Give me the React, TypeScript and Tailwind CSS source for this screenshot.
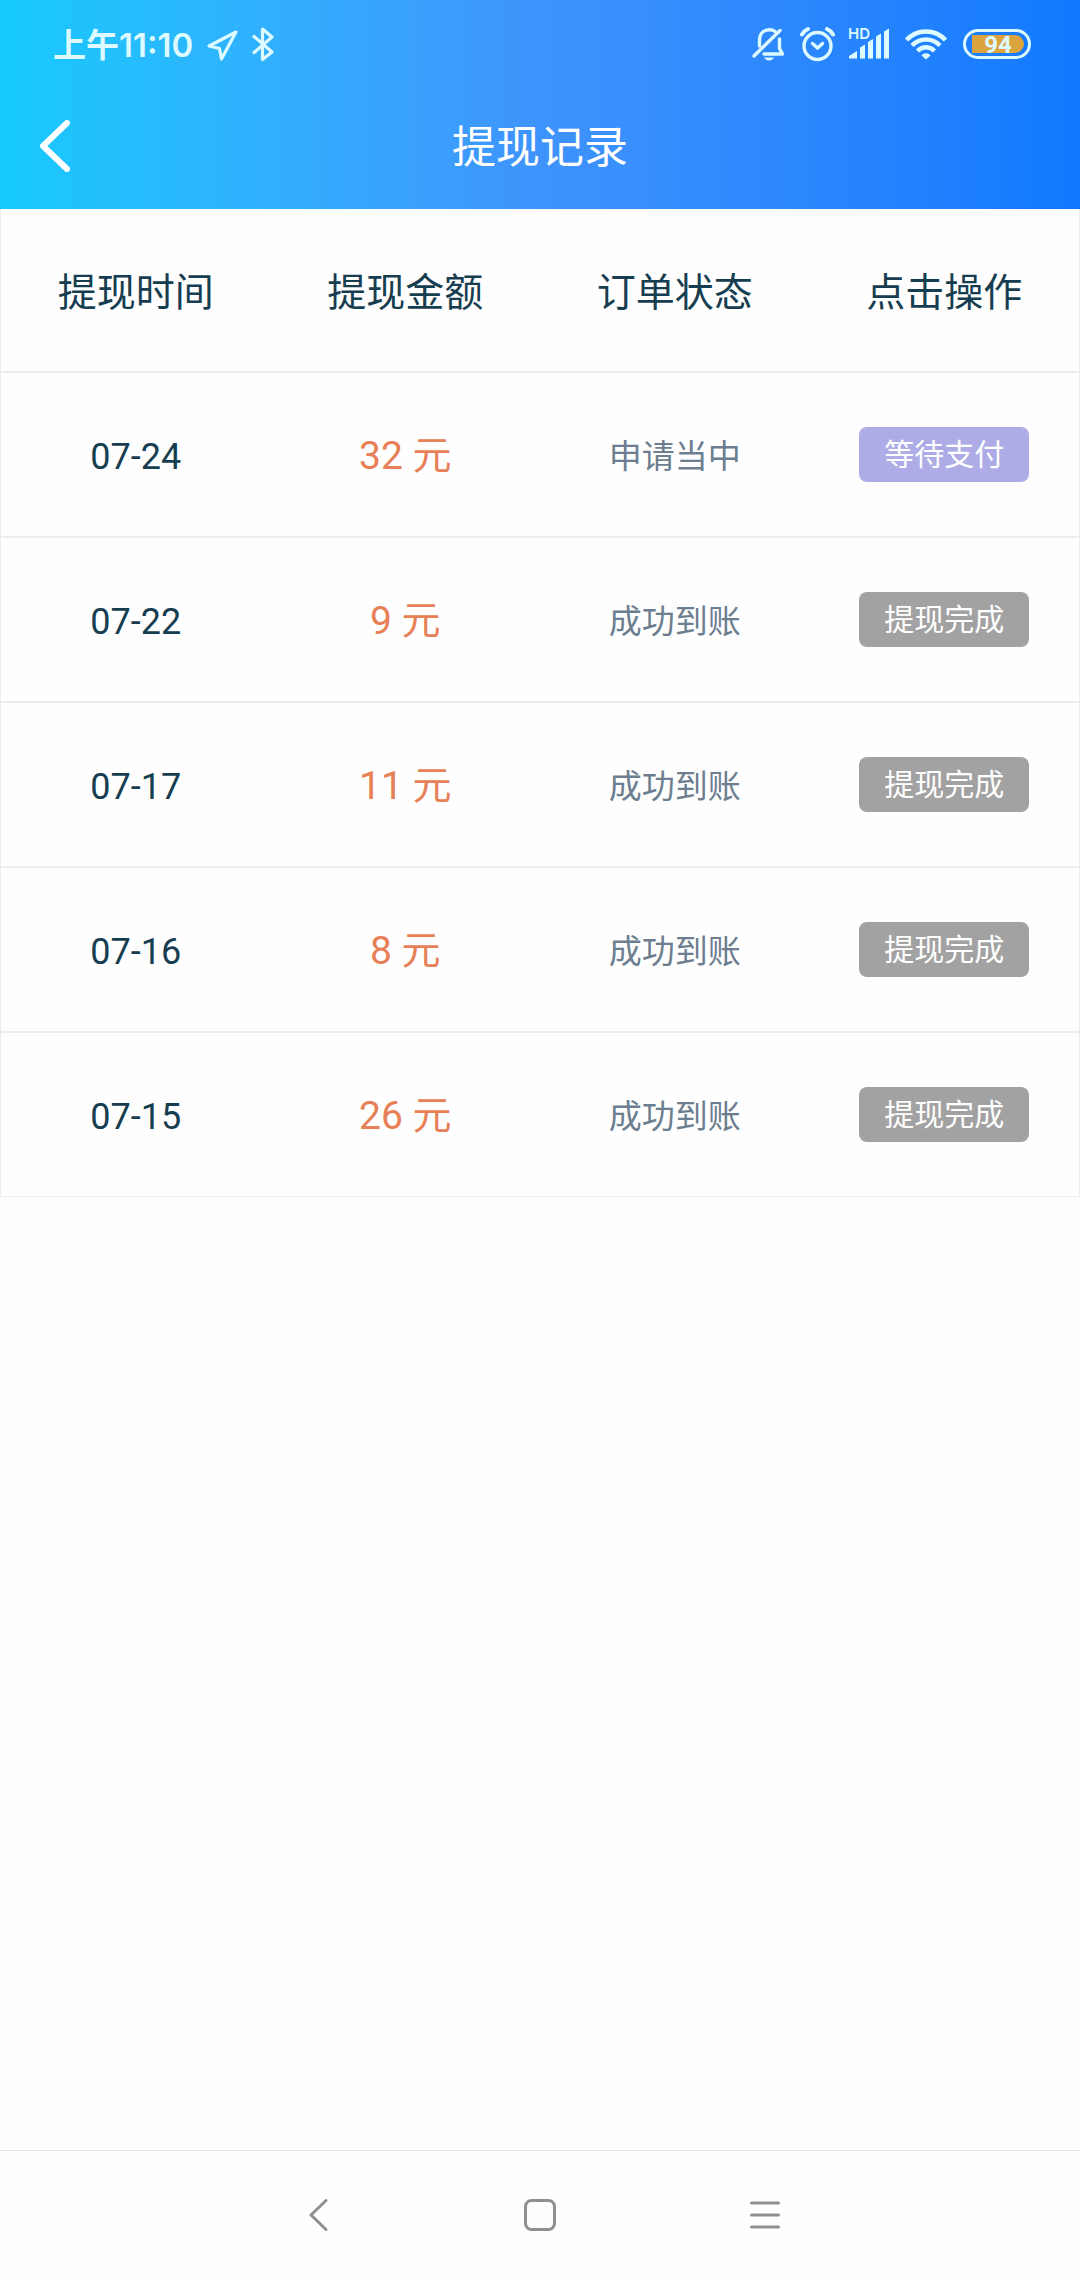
import { ReactNode } from 'react';

type OrderRecord = {
  date: string;
  amount: number;
  status: string;
  action: string;
  done: boolean;
};

const records: OrderRecord[] = [
  { date: '07-24', amount: 32, status: '申请当中', action: '等待支付', done: false },
  { date: '07-22', amount: 9, status: '成功到账', action: '提现完成', done: true },
  { date: '07-17', amount: 11, status: '成功到账', action: '提现完成', done: true },
  { date: '07-16', amount: 8, status: '成功到账', action: '提现完成', done: true },
  { date: '07-15', amount: 26, status: '成功到账', action: '提现完成', done: true },
];

const columns = ['提现时间', '提现金额', '订单状态', '点击操作'];

function StatusBar() {
  return (
    <div className="flex h-[84px] items-center justify-between pt-1 pr-[49px] pl-[53px] text-[#dcfaff]">
      <div className="flex items-center gap-[13px]">
        <span className="pt-0.5 font-[Inter,'Noto_Sans_CJK_SC',sans-serif] text-[33px] leading-[40px] font-semibold">上午11:10</span>
        {/* 定位 */}
        <svg width="33" height="36" viewBox="0 0 33 36" fill="none" stroke="currentColor" strokeWidth="3.2" strokeLinejoin="round">
          <path d="M30 6 3 20 13.500 22.500 15.500 33Z" />
        </svg>
        {/* 蓝牙 */}
        <svg width="22" height="36" viewBox="0 0 22 36" fill="none" stroke="currentColor" strokeWidth="3.2" strokeLinejoin="round" strokeLinecap="round">
          <path d="M2 10.500 20 26 10.500 33.500V3L20 11 2 26.500" />
        </svg>
      </div>

      <div className="flex items-center gap-[13px]">
        {/* 静音 */}
        <svg width="35" height="36" viewBox="0 0 35 36" fill="none" stroke="currentColor" strokeWidth="3.4" strokeLinecap="round" strokeLinejoin="round">
          <path d="M7.500 20V14.500C7.500 8 11.500 3.800 17.500 3.800 19.500 3.800 21.500 4.300 23 5.500" />
          <path d="M27.500 13V22.500L30.500 28H12" />
          <path d="M2 30 28 4.500" />
          <path d="M12 31.500H22C21 33.500 19 34.500 17 34.500 15 34.500 13 33.500 12 31.500Z" fill="currentColor" stroke="none" />
        </svg>
        {/* 闹钟 */}
        <svg width="35" height="36" viewBox="0 0 35 36" fill="none" stroke="currentColor" strokeWidth="3.4" strokeLinecap="round" strokeLinejoin="round">
          <circle cx="17.500" cy="20" r="13.500" />
          <path d="M12.500 17.500 17.500 22 22.500 17.500" />
          <path d="M2 8.500C3.500 6 5.500 4 8 3M33 8.500C31.500 6 29.500 4 27 3" strokeWidth="4" />
        </svg>
        {/* 信号 */}
        <svg width="41" height="36" viewBox="0 0 41 36" fill="currentColor" className="overflow-visible">
          <text x="0" y="13" className="font-[Inter,sans-serif] text-[15px] font-semibold">HD</text>
          <path d="M1 32.500V30L9 25V32.500ZM12 32.500V21.500L17 18.500V32.500ZM20 32.500V16L25 13V32.500ZM28 32.500V10.500L33 7.500V32.500ZM36 32.500V5.500L41 2.500V32.500Z" />
        </svg>
        {/* WiFi */}
        <svg width="48" height="36" viewBox="0 0 48 36" fill="none" stroke="currentColor" strokeWidth="4.500">
          <path d="M4.500 14C15 2.500 33 2.500 43.500 14" />
          <path d="M10 19.500C18 11.500 30 11.500 38 19.500" />
          <path d="M15.500 25C20.500 20 27.500 20 32.500 25" />
          <path d="M24 33.500 19.500 29.500C22 26.500 26 26.500 28.500 29.500Z" fill="currentColor" stroke="none" />
        </svg>
        {/* 电量 */}
        <div className="flex h-[30px] w-[68px] items-center rounded-full border-3 border-current pr-1 pl-[6px]">
          <div className="flex h-[18px] w-full items-center justify-center rounded-l-[2px] rounded-r-full bg-[#dba43f]">
            <span className="pt-0.5 font-[Roboto,sans-serif] text-[24px] leading-[18px] font-bold">94</span>
          </div>
        </div>
      </div>
    </div>
  );
}

function NavButton({ label, children }: { label: string; children: ReactNode }) {
  return (
    <button type="button" aria-label={label} className="flex h-full w-56 items-center justify-center">
      <svg width="40" height="40" viewBox="0 0 40 40" fill="none" stroke="#8f8f8f" strokeWidth="3" strokeLinecap="round" strokeLinejoin="round">
        {children}
      </svg>
    </button>
  );
}

export default function App() {
  return (
    <div className="flex min-h-screen flex-col bg-[#fefefe] font-[Roboto,'Noto_Sans_CJK_SC',sans-serif] text-[#173d50]">
      <header className="bg-linear-to-r from-[#14cafd] via-[#3f93fc] to-[#0f79ff]">
        <StatusBar />
        <div className="grid h-[125px] grid-cols-[120px_1fr_120px] items-center">
          <button type="button" aria-label="返回" className="flex h-full items-center pl-[38px] text-white">
            <svg width="34" height="56" viewBox="0 0 34 56" fill="none" stroke="currentColor" strokeWidth="6" strokeLinecap="round" strokeLinejoin="round">
              <path d="M29 4 5 27 29 50" />
            </svg>
          </button>
          <h1 className="pt-0.5 text-center text-[44px] leading-[60px] text-white">提现记录</h1>
        </div>
      </header>

      <main>
        <table className="w-full table-fixed border-separate border-spacing-0 border-x border-b border-[#ededed] text-center">
          <thead>
            <tr className="h-[162px]">
              {columns.map((column) => (
                <th key={column} scope="col" className="pt-1.5 text-[39px] leading-[60px] font-normal">{column}</th>
              ))}
            </tr>
          </thead>
          <tbody>
            {records.map((record) => (
              <tr key={record.date} className="h-[165px] *:border-t-2 *:border-[#ededed]">
                <td className="pt-1 text-[36px] leading-[60px]">{record.date}</td>
                <td className="pt-0.5 text-[39px] leading-[60px] text-[#e77f57]">{record.amount} 元</td>
                <td className="pt-1 text-[33px] leading-[60px] text-[#6c7e8f]">{record.status}</td>
                <td>
                  <button
                    type="button"
                    className={`inline-flex h-[55px] items-center rounded-lg px-[25px] align-middle text-[30px] leading-[52px] text-white ${record.done ? 'bg-[#a2a2a2]' : 'bg-[#aeace7]'}`}
                  >
                    {record.action}
                  </button>
                </td>
              </tr>
            ))}
          </tbody>
        </table>
      </main>

      {/* 系统导航栏 */}
      <nav className="mt-auto flex h-[130px] justify-center border-t border-[#e3e3e3]">
        <NavButton label="后退">
          <path d="M30 4.500 15 19 30 33.500" />
        </NavButton>
        <NavButton label="主屏幕">
          <rect x="5.500" y="4.500" width="29" height="29" rx="6" />
        </NavButton>
        <NavButton label="菜单">
          <path d="M7.500 7H34.500M7.500 19H34.500M7.500 31H34.500" />
        </NavButton>
      </nav>
    </div>
  );
}
